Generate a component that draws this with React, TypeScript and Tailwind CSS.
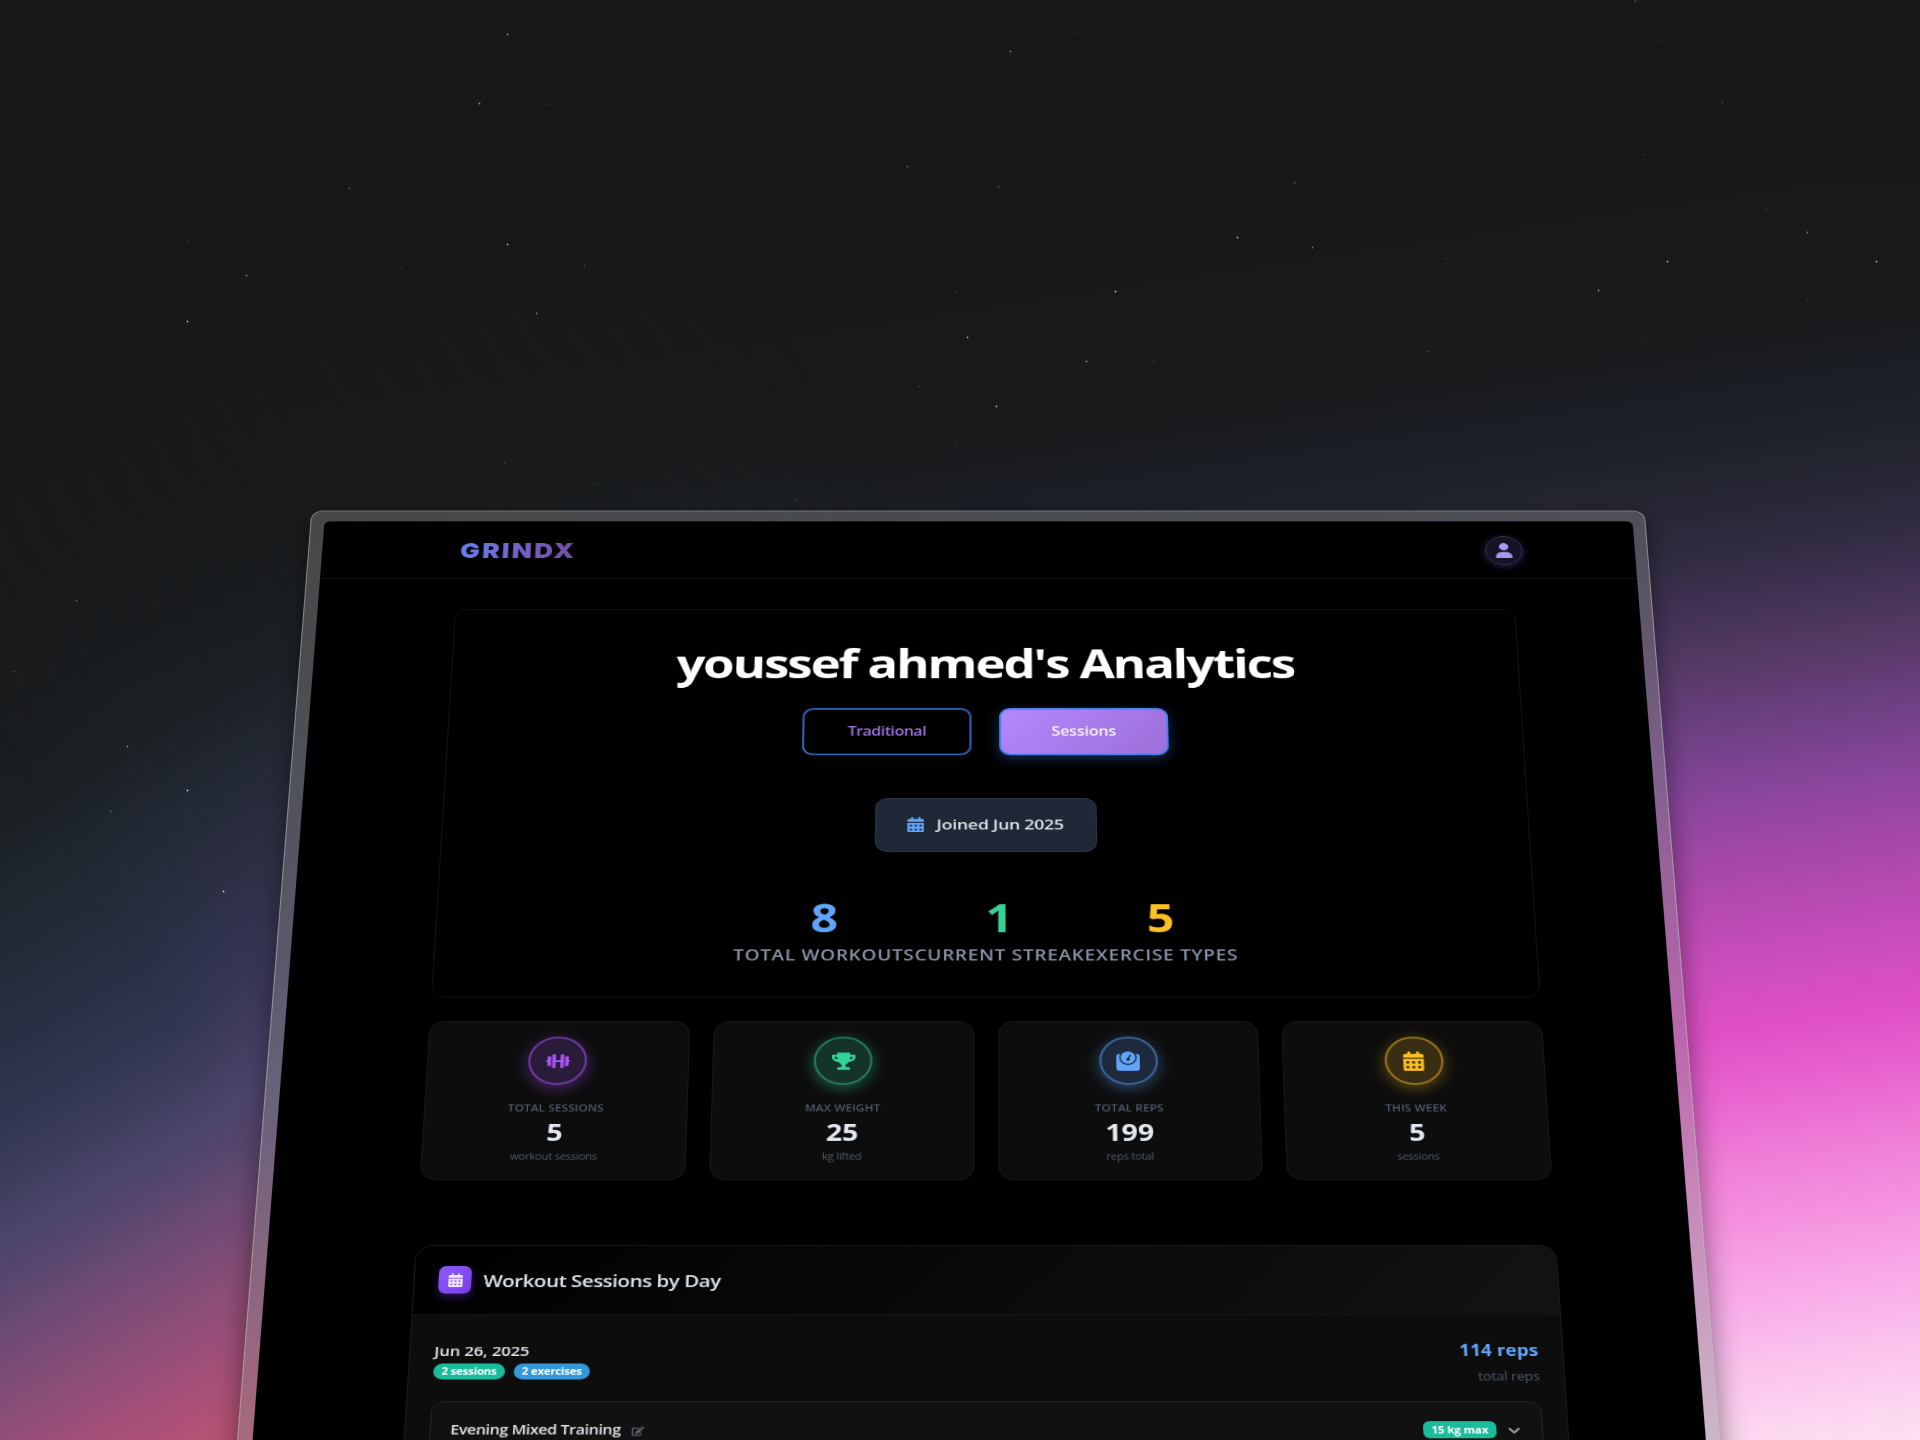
import React from "react";
import type { IconType } from "react-icons";
import { FaCalendarAlt, FaChevronDown, FaDumbbell, FaEdit, FaTrophy, FaWeight } from "react-icons/fa";
import { FaCalendarDays, FaUser } from "react-icons/fa6";

/* x, y, opacity of every star in the night sky */
const STARS: [number, number, number][] = [
  [507, 34, 0.5], [1074, 33, 0.12], [1010, 51, 0.4], [1635, 1, 0.25], [1658, 40, 0.12],
  [479, 103, 0.5], [546, 104, 0.15], [1722, 102, 0.15], [907, 166, 0.3], [998, 186, 0.25],
  [1294, 182, 0.25], [349, 188, 0.3], [1237, 237, 0.65], [1312, 247, 0.4], [1446, 258, 0.12],
  [1807, 232, 0.45], [1667, 261, 0.6], [1876, 261, 0.6], [507, 244, 0.6], [584, 265, 0.2],
  [246, 275, 0.4], [187, 241, 0.12], [187, 321, 0.7], [536, 313, 0.4], [1115, 291, 0.65],
  [955, 291, 0.12], [1598, 290, 0.5], [1807, 299, 0.12], [967, 337, 0.55], [1086, 361, 0.45],
  [1153, 361, 0.12], [1427, 351, 0.2], [1645, 337, 0.1], [919, 386, 0.15], [996, 406, 0.6],
  [956, 445, 0.12], [504, 463, 0.15], [597, 484, 0.12], [796, 499, 0.15], [1643, 154, 0.12],
  [1766, 209, 0.12], [400, 267, 0.1], [76, 600, 0.3], [14, 671, 0.2], [127, 746, 0.45],
  [187, 790, 0.75], [110, 811, 0.25], [223, 891, 0.7],
];

function Sky() {
  return (
    <div className="absolute inset-0 bg-[linear-gradient(150deg,#181818_420px,#191a1b_560px,#1b2023_713px,#1f2730_780px,#242c3a_849px,#293147_915px,#313750_975px,#3c3c5b_1020px,#4a456a_1073px,#53466d_1104px,#6b4a74_1154px,#914e78_1247px,#a54f78_1297px,#bb5373_1362px)]">
      <div className="absolute inset-0 bg-[linear-gradient(171.5deg,#181818_430px,#191a1b_571px,#1b1f27_660px,#22242f_719px,#2d2a3d_788px,#3f3152_848px,#553964_907px,#6a3f7f_966px,#86459a_1035px,#a147a6_1098px,#b84ab2_1160px,#cf4ebf_1224px,#df4fc5_1274px,#ea68d2_1350px,#f080d8_1413px,#f594e0_1476px,#f8aae8_1539px,#fac0ec_1602px,#fcd4f0_1666px,#fddff2_1708px)] [mask-image:linear-gradient(60deg,transparent_350px,#000_1250px)]" />
      <div className="absolute inset-x-0 top-0 h-[260px] bg-[linear-gradient(180deg,#181818_150px,rgba(24,24,24,0))]" />
      <svg className="absolute inset-0" width="1920" height="1440">
        {STARS.map(([x, y, o]) => (
          <circle key={`${x}-${y}`} cx={x + 0.5} cy={y + 0.5} r="0.9" fill="#fff" opacity={o} />
        ))}
      </svg>
    </div>
  );
}

function Header() {
  return (
    <header className="flex h-[74px] items-center justify-between border-b border-[#141414] pt-[2px] pr-[112px] pl-[138px]">
      <span className="bg-gradient-to-r from-[#667eea] to-[#764ba2] bg-clip-text pt-[1px] font-['Inter',sans-serif] text-[26px] leading-[32px] font-black tracking-[2.3px] text-transparent">
        GRINDX
      </span>
      <span className="flex size-[37px] items-center justify-center rounded-full border border-[#352d50] bg-[#171326] shadow-[0_2px_8px_rgba(139,92,246,0.35)]">
        <FaUser className="size-[19px] text-[#a897ee]" />
      </span>
    </header>
  );
}

function HeroStat({ value, label, color }: { value: string; label: string; color: string }) {
  return (
    <div className="flex flex-col items-center">
      <span className={`text-[46px] leading-[54px] font-bold ${color}`}>{value}</span>
      <span className="mt-[5px] text-[18px] leading-[24px] font-[560] tracking-[0.7px] text-[#8892a5]">{label}</span>
    </div>
  );
}

function Hero() {
  return (
    <section className="flex h-[470px] flex-col items-center rounded-[14px] border border-[#131313] pt-[37px]">
      <h1 className="text-[50px] leading-[60px] font-bold tracking-[-2px] text-white">youssef ahmed's Analytics</h1>
      <div className="mt-[25.5px] flex gap-[27px]">
        <button className="h-[58px] w-[165px] rounded-[11px] border-2 border-[#2e62b8] text-[15.6px] font-[650] tracking-[-0.5px] text-[#9b6fdd]">
          Traditional
        </button>
        <button className="h-[58px] w-[165px] rounded-[11px] border-2 border-[#4a80ee] bg-[linear-gradient(135deg,#b388ff,#9c6fd8)] text-[15.6px] font-[650] tracking-[-0.15px] text-[#f8f5ff] shadow-[0_4px_14px_rgba(59,130,246,0.35)]">
          Sessions
        </button>
      </div>
      <div className="mt-[52px] flex h-[65px] w-[214px] items-center justify-center gap-[12px] rounded-[12px] border border-[#2c3645] bg-[#1f2836]">
        <FaCalendarDays className="h-[18.5px] w-[16.5px] text-[#60a5fa]" />
        <span className="text-[17px] font-[650] tracking-[-0.2px] text-[#dde1e7]">Joined Jun 2025</span>
      </div>
      <div className="mt-[50px] flex">
        <HeroStat value="8" label="TOTAL WORKOUTS" color="text-[#60a5fa]" />
        <HeroStat value="1" label="CURRENT STREAK" color="text-[#34d399]" />
        <HeroStat value="5" label="EXERCISE TYPES" color="text-[#fbbf24]" />
      </div>
    </section>
  );
}

const CARDS: { title: string; value: string; sub: string; Icon: IconType; tone: string }[] = [
  { title: "TOTAL SESSIONS", value: "5", sub: "workout sessions", Icon: FaDumbbell, tone: "border-[#6b3a9c] bg-[#2b1b3b] text-[#a855f7] shadow-[0_4px_15px_rgba(168,85,247,0.4)]" },
  { title: "MAX WEIGHT", value: "25", sub: "kg lifted", Icon: FaTrophy, tone: "border-[#247a5b] bg-[#14332a] text-[#34d399] shadow-[0_4px_15px_rgba(52,211,153,0.4)]" },
  { title: "TOTAL REPS", value: "199", sub: "reps total", Icon: FaWeight, tone: "border-[#3c649a] bg-[#1d2a3d] text-[#60a5fa] shadow-[0_4px_15px_rgba(96,165,250,0.4)]" },
  { title: "THIS WEEK", value: "5", sub: "sessions", Icon: FaCalendarAlt, tone: "border-[#947220] bg-[#3a2e12] text-[#fbbf24] shadow-[0_4px_15px_rgba(251,191,36,0.35)]" },
];

function Cards() {
  return (
    <div className="mt-[27px] grid grid-cols-4 gap-[22px]">
      {CARDS.map(({ title, value, sub, Icon, tone }) => (
        <div key={title} className="flex h-[180px] flex-col items-center rounded-[15px] border border-[#181818] bg-[#0d0d0d] pt-[17px]">
          <div className={`flex size-[55px] items-center justify-center rounded-full border-2 ${tone}`}>
            <Icon className="size-[22px]" />
          </div>
          <div className="mt-[18px] text-[11px] leading-[16px] font-[650] tracking-[0.1px] text-[#515b6a]">{title}</div>
          <div className="mt-[3px] text-[26.5px] leading-[32px] font-bold text-[#e2e8f0]">{value}</div>
          <div className="mt-[4px] text-[10.4px] leading-[14px] tracking-[-0.2px] text-[#515b6a]">{sub}</div>
        </div>
      ))}
    </div>
  );
}

function Sessions() {
  return (
    <section className="mt-[71px] h-[500px] overflow-hidden rounded-[17px] border border-[#1a1a1a] bg-[#0d0d0d]">
      <div className="flex h-[75px] items-center gap-[11px] border-b border-[#151515] bg-[linear-gradient(135deg,#000,#131313)] pl-[22px]">
        <span className="flex size-[30px] items-center justify-center rounded-[7px] bg-gradient-to-br from-[#8b5cf6] to-[#7c3aed] shadow-[0_4px_10px_rgba(124,58,237,0.35)]">
          <FaCalendarDays className="h-[15px] w-[13px] text-[#f3eeff]" />
        </span>
        <h2 className="pt-[1px] text-[18.8px] leading-[28px] font-[630] tracking-[-0.43px] text-[#dde3ea]">Workout Sessions by Day</h2>
      </div>
      <div className="pt-[25px] pr-[22px] pl-[22px]">
        <div className="flex justify-between">
          <div className="pt-[2.5px]">
            <div className="text-[15px] leading-[20px] font-[630] tracking-[-0.05px] text-[#dde3ea]">Jun 26, 2025</div>
            <div className="mt-[4px] flex gap-[8px] text-[10.3px] leading-[17.5px] font-bold tracking-[-0.15px] text-white">
              <span className="w-[65px] rounded-full bg-[#1abc9c] text-center">2 sessions</span>
              <span className="w-[69px] rounded-full bg-[#3498db] text-center">2 exercises</span>
            </div>
          </div>
          <div className="pt-[0.5px] text-right">
            <div className="text-[17.3px] leading-[24px] font-bold text-[#60a5fa]">114 reps</div>
            <div className="mt-[6px] text-[12.8px] leading-[18px] tracking-[-0.1px] text-[#515b6a]">total reps</div>
          </div>
        </div>
        <div className="mt-[18.5px] h-[180px] rounded-[12px] border border-[#242424] bg-[#111111] pt-[19px] pr-[19px] pl-[17.5px]">
          <div className="flex items-center justify-between">
            <div className="flex items-center gap-[10px]">
              <span className="text-[14.3px] leading-[20px] font-[630] tracking-[-0.3px] text-[#dde3ea]">Evening Mixed Training</span>
              <FaEdit className="mt-[2px] size-[11px] text-[#5a6474]" />
            </div>
            <div className="flex items-center gap-[10px]">
              <span className="h-[18px] w-[66px] rounded-[6px] bg-[#1abc9c] text-center text-[10.4px] leading-[18px] font-bold tracking-[-0.1px] text-white">15 kg max</span>
              <FaChevronDown className="mt-[2px] size-[12px] text-[#99a1b1]" />
            </div>
          </div>
        </div>
      </div>
    </section>
  );
}

export default function App() {
  return (
    <div className="relative h-[1440px] w-[1920px] overflow-hidden bg-[#181818] font-['Open_Sans','Noto_Sans',sans-serif]">
      <Sky />
      {/* The tablet is one flat plane, tilted away from the viewer at its top edge. */}
      <div className="absolute top-0 left-0 h-[1250px] w-[1335px] origin-top-left rounded-[12px] border border-[rgba(190,190,190,0.55)] bg-[rgba(135,135,135,0.41)] p-[12.5px] shadow-[0_6px_26px_rgba(0,0,0,0.45)] [transform:matrix3d(1,0,0,0,-0.090882,0.724812,0,-0.0000935,0,0,1,0,972,521,0,1)_translate(-661.5px,-13.5px)]">
        <div className="h-full overflow-hidden rounded-[6px] bg-black">
          <Header />
          <main className="pt-[38.5px] pr-[122.5px] pl-[136.5px]">
            <Hero />
            <Cards />
            <Sessions />
          </main>
        </div>
      </div>
    </div>
  );
}
